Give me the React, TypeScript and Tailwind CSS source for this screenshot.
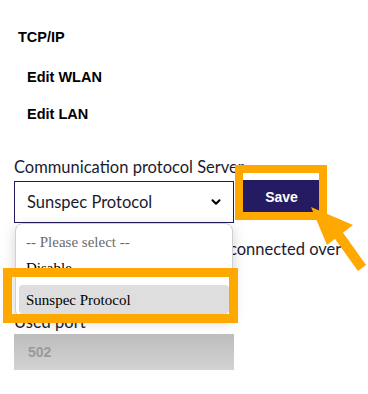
import { ChevronDown } from "lucide-react";

const label = "font-['Lato',sans-serif] text-[16.5px] leading-[20px] text-[#1b1b2f]";

export default function App() {
  return (
    <div className="relative w-[368px] h-[394px] overflow-hidden bg-white">
      <div className="flex flex-col px-[14px] pt-[29px]">
        <div className="flex flex-col font-['Liberation_Sans',Arial,sans-serif] text-[14.5px] font-bold leading-[16px] text-black">
          <h3 className="pl-[4px]">TCP/IP</h3>
          <h4 className="pl-[13px] mt-[24px]">Edit WLAN</h4>
          <h4 className="pl-[13px] mt-[21px]">Edit LAN</h4>
        </div>

        <label className={`${label} mt-[35px]`}>Communication protocol Server</label>
        <div className="flex items-start gap-[9px] mt-[4px]">
          <div className="flex items-center justify-between w-[220px] h-[42px] border border-[#231a5e] pl-[12px] pr-[10px]">
            <span className={label}>Sunspec Protocol</span>
            <ChevronDown className="w-[14px] h-[14px] text-black" strokeWidth={3.5} />
          </div>
          <button className="w-[77px] h-[35px] -mt-[1px] bg-[#241b62] text-white font-['Liberation_Sans',Arial,sans-serif] font-bold text-[14px]">
            Save
          </button>
        </div>

        {/* rest of this sentence sits under the open list */}
        <p className={`${label} whitespace-nowrap mt-[16px] pl-[215px]`}>connected over</p>

        <label className={`${label} mt-[53px]`}>Used port</label>
        <div className="flex items-center w-[220px] h-[36px] mt-[2px] pl-[14px] bg-gradient-to-b from-[#bdbdbd] to-[#d3d3d3] font-['Liberation_Sans',Arial,sans-serif] text-[14px] font-bold text-[#9a9a9a]">
          502
        </div>
      </div>

      {/* open select list */}
      <div className="absolute left-[15px] top-[223px] w-[218px] h-[95px] rounded-lg border border-[#d0d0d0] bg-white shadow-[0_4px_14px_rgba(0,0,0,0.18)] flex flex-col font-['Liberation_Serif',serif] text-[15px] leading-[18px]">
        <div className="pl-[10px] pt-[9px] text-[#6b6b6b]">-- Please select --</div>
        <div className="pl-[10px] pt-[8px] text-black">Disable</div>
        <div className="mx-[3px] mt-[8px] h-[29px] rounded-[4px] bg-[#dedede] flex items-center pl-[7px] text-black">
          Sunspec Protocol
        </div>
      </div>

      {/* highlight frames */}
      <div className="absolute left-[3px] top-[268px] w-[235px] h-[55px] border-[9px] border-[#ffa800]" />
      <div className="absolute left-[235px] top-[165px] w-[92px] h-[55px] border-[8px] border-[#ffa800]" />

      <svg className="absolute left-0 top-0" width="368" height="394" viewBox="0 0 368 394">
        <polygon points="311,207 353,225 327,245" fill="#ffa800" />
        <line x1="332" y1="226" x2="362" y2="268" stroke="#ffa800" strokeWidth="10" />
      </svg>
    </div>
  );
}
